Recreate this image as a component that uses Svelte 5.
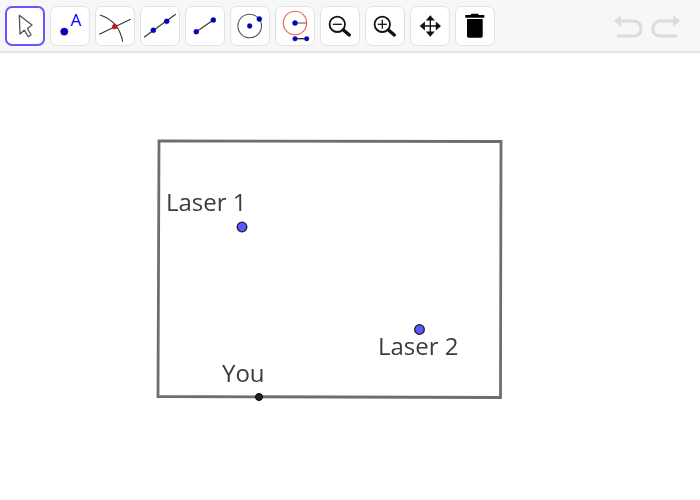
<script>
  // toolbar buttons, left to right
  const tools = ['move', 'point', 'intersect', 'line', 'segment', 'circle', 'compass', 'zoomout', 'zoomin', 'pan', 'trash'];
</script>

<div class="applet">
  <div class="toolbar">
    <div class="tools">
      {#each tools as tool, i}
        <button class="tool" class:selected={i === 0} aria-label={tool}>
          <svg viewBox="0 0 40 40" width="40" height="40">
            {#if tool === 'move'}
              <path d="M14.300 9.300 L15 28 L19.200 24.200 L23.300 30.700 L26 29 L22.500 22.500 L27 19 Z" fill="#fff" stroke="#555" stroke-width="1.300" stroke-linejoin="round" />
            {:else if tool === 'point'}
              <circle cx="14.300" cy="25.600" r="3.700" fill="#0000d0" stroke="#000050" stroke-width=".4" />
              <text x="20.500" y="19.500" class="point-label">A</text>
            {:else if tool === 'intersect'}
              <path d="M4.300 28.300 L35.700 13.300" class="thin" />
              <path d="M5 9 Q24 15 27.700 35.700" class="thin" />
              <circle cx="19.700" cy="20.700" r="2.400" fill="#e01010" stroke="#700" stroke-width=".4" />
            {:else if tool === 'line'}
              <path d="M4 31.300 L35.700 8.300" class="thin" />
              <circle cx="13.300" cy="24.300" r="2.500" class="blue" />
              <circle cx="26.700" cy="15.300" r="2.500" class="blue" />
            {:else if tool === 'segment'}
              <path d="M11.300 25.700 L28.300 14" class="thin" />
              <circle cx="11.300" cy="25.700" r="2.500" class="blue" />
              <circle cx="28.300" cy="14" r="2.500" class="blue" />
            {:else if tool === 'circle'}
              <circle cx="19.700" cy="20" r="11.800" fill="none" stroke="#555" stroke-width="1.100" />
              <circle cx="19.700" cy="20" r="2.400" class="blue" />
              <circle cx="29.300" cy="13" r="2.500" class="blue" />
            {:else if tool === 'compass'}
              <circle cx="20" cy="17" r="11.700" fill="none" stroke="#f05858" stroke-width="1.100" />
              <path d="M20 17 H31.700" stroke="#777" stroke-width="1.300" />
              <circle cx="20" cy="17" r="2.500" class="blue" />
              <path d="M20 32.700 H31.700" stroke="#222" stroke-width="1.300" />
              <circle cx="20" cy="32.700" r="2.300" class="blue" />
              <circle cx="31.700" cy="32.700" r="2.300" class="blue" />
            {:else if tool === 'zoomout' || tool === 'zoomin'}
              <circle cx="17.300" cy="18.300" r="7.700" fill="none" stroke="#111" stroke-width="1.800" />
              <path d="M23.400 24 L29.300 29" stroke="#111" stroke-width="3.400" stroke-linecap="round" />
              <path d="M12.800 18.300 H21.800" stroke="#111" stroke-width="1.300" />
              {#if tool === 'zoomin'}
                <path d="M17.300 13.800 V22.800" stroke="#111" stroke-width="1.300" />
              {/if}
            {:else if tool === 'pan'}
              <path d="M20.300 11 V29 M12 20 H29" stroke="#111" stroke-width="1.300" />
              <path d="M20.300 9.300 L15.800 14.500 H24.800 Z M20.300 30.700 L15.800 25.500 H24.800 Z M9.700 20 L14.900 15.500 V24.500 Z M31 20 L25.800 15.500 V24.500 Z" fill="#111" />
            {:else if tool === 'trash'}
              <path d="M10.300 9 H29.300 V11.700 H10.300 Z M15.500 9 L16.500 7.700 H23 L24 9 Z" fill="#000" />
              <path d="M12 13 H27.700 V30 Q27.700 31.700 26 31.700 H13.700 Q12 31.700 12 30 Z" fill="#000" />
            {/if}
          </svg>
        </button>
      {/each}
    </div>
    <div class="history">
      <svg viewBox="0 0 30 26" width="30" height="26">
        <path d="M6 7 H20 Q28 7 28 15 Q28 22 20 22 H4" fill="none" stroke="#dcdcdc" stroke-width="3" />
        <path d="M1 7 L8 1 V13 Z" fill="#dcdcdc" />
      </svg>
      <svg viewBox="0 0 30 26" width="30" height="26">
        <path d="M24 7 H10 Q2 7 2 15 Q2 22 10 22 H26" fill="none" stroke="#dcdcdc" stroke-width="3" />
        <path d="M29 7 L22 1 V13 Z" fill="#dcdcdc" />
      </svg>
    </div>
  </div>

  <svg class="board" viewBox="0 0 700 447" width="700" height="447">
    <path d="M159 88 L501 88.500 L500.500 344.500 L158 343.500 Z" class="frame" />
    <text x="166" y="157.500" class="caption">Laser 1</text>
    <text x="378" y="302" class="caption">Laser 2</text>
    <text x="222" y="328.500" class="caption">You</text>
    <circle cx="242" cy="174" r="4.800" class="laser" />
    <circle cx="419.500" cy="276.500" r="4.800" class="laser" />
    <circle cx="259" cy="344" r="3.500" fill="#222" stroke="#000" stroke-width="1" />
  </svg>
</div>

<style>
  :global(body) {
    background: #fff;
  }

  .applet {
    width: 700px;
    height: 500px;
    overflow: hidden;
    font-family: "Open Sans", sans-serif;
  }

  .toolbar {
    display: flex;
    justify-content: space-between;
    align-items: flex-start;
    box-sizing: border-box;
    height: 53px;
    padding: 6px 5px 0 5px;
    background: #f7f7f7;
    border-bottom: 2px solid #e6e6e6;
  }

  .tools {
    display: flex;
    gap: 5px;
  }

  .tool {
    position: relative;
    width: 40px;
    height: 40px;
    padding: 0;
    background: #fff;
    border: 1px solid #e2e2e2;
    border-radius: 7px;
  }

  .tool svg {
    display: block;
    position: absolute;
    top: -1px;
    left: -1px;
  }

  .tool.selected {
    border: 2px solid #6557ff;
  }

  .tool.selected svg {
    top: -2px;
    left: -2px;
  }

  .thin {
    fill: none;
    stroke: #333;
    stroke-width: 1.100;
  }

  .blue {
    fill: #0000d0;
    stroke: #000060;
    stroke-width: .4;
  }

  .point-label {
    font-family: "Open Sans", sans-serif;
    font-size: 17px;
    fill: #0000ff;
  }

  .history {
    display: flex;
    gap: 8px;
    margin-right: 14px;
    margin-top: 8px;
  }

  .history svg {
    display: block;
  }

  .board {
    display: block;
    filter: blur(0.6px);
  }

  .frame {
    fill: none;
    stroke: #6e6e6e;
    stroke-width: 2.800;
  }

  .caption {
    font-family: "Open Sans", sans-serif;
    font-size: 24px;
    fill: #3c3c3c;
  }

  .laser {
    fill: #5a5aff;
    stroke: #1a1a33;
    stroke-width: 1.300;
  }
</style>
